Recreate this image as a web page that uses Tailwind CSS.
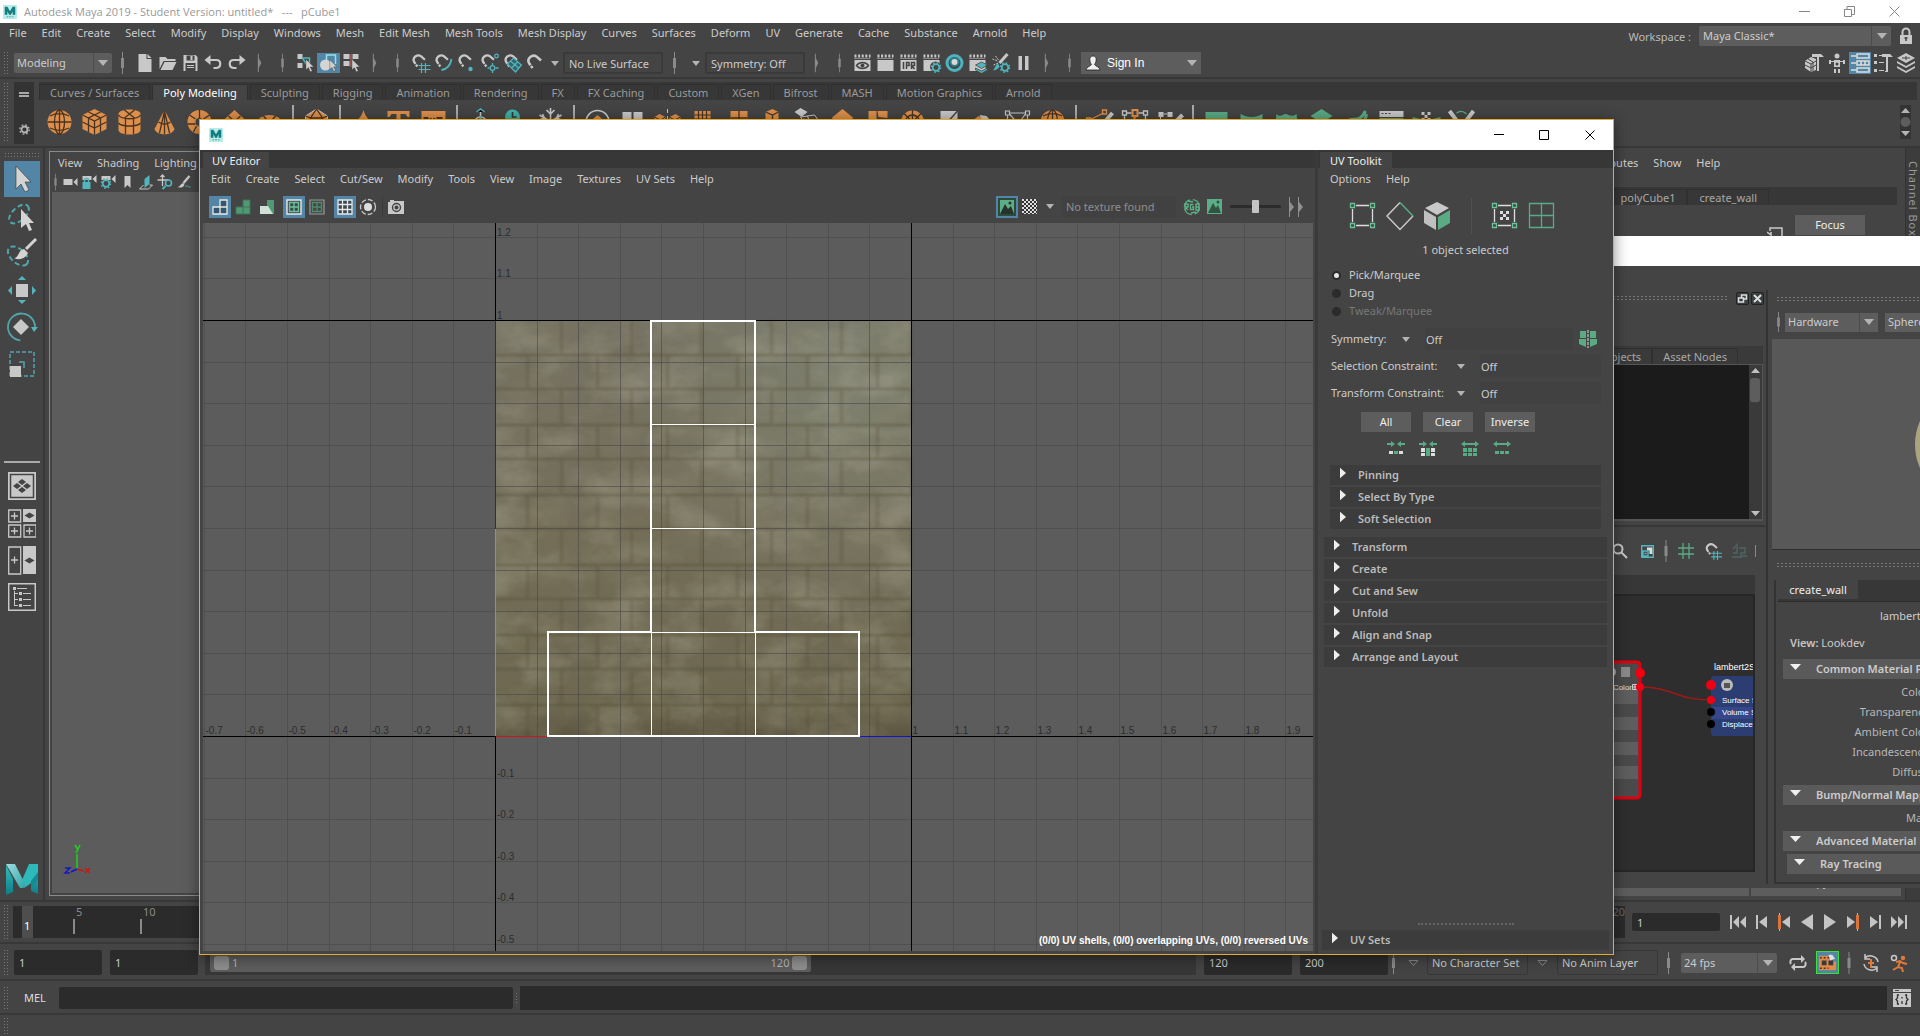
<!DOCTYPE html>
<html lang="en">
<head>
<meta charset="utf-8">
<title>Autodesk Maya 2019</title>
<script src="https://cdn.jsdelivr.net/npm/@tailwindcss/browser@4"></script>
</head>
<body class="relative flex h-screen flex-col overflow-hidden bg-[#444444] font-['Noto_Sans','Open_Sans',sans-serif] text-[11px] leading-4 text-[#cccccc] whitespace-nowrap">

<svg class="absolute size-0" aria-hidden="true">
  <defs>
    <linearGradient id="mA" x1="0" y1="0" x2="1" y2="1"><stop offset="0" stop-color="#9fdde0"/><stop offset="1" stop-color="#2aa4a6"/></linearGradient>
    <linearGradient id="mB" x1="0" y1="0" x2="0" y2="1"><stop offset="0" stop-color="#2fc0c0"/><stop offset="1" stop-color="#0f7d86"/></linearGradient>
  </defs>
  <symbol id="logo" viewBox="0 0 16 16"><path fill="#b8ecea" d="M0 0h16v16H0z"/><path fill="#137d7f" d="M2 2h3l3 5 3-5h3v9h-3V7l-2 4H7L5 7v4H2z"/><path stroke="#4c9b98" d="M4 13.500h8" stroke-dasharray="2 1"/></symbol>
  <symbol id="mayaM" viewBox="0 0 34 32"><path fill="url(#mB)" d="M1 2l7 14v13l-7 3z"/><path fill="url(#mB)" d="M33 1v30l-7-3V14z"/><path fill="#2db9bb" d="M24 1h9v8l-8 12-6 4-2-8z"/><path fill="#128c93" d="M33 9v8l-7 8V18z"/><path fill="url(#mA)" d="M1 1h9l11 22-3 2h-3z"/></symbol>
  <symbol id="sep" viewBox="0 0 8 24"><path fill="#8a8a8a" d="M3.500 1h1v22h-1zM2.500 7h3v10h-3z"/></symbol>
  <symbol id="sepR" viewBox="0 0 8 24"><path fill="#8a8a8a" d="M2 1h1.200v5l3 6-3 6v5H2z"/></symbol>
  <symbol id="tri" viewBox="0 0 10 6"><path fill="#b4b4b4" d="M0 0h10L5 6z"/></symbol>
  <symbol id="tri-w" viewBox="0 0 11 6"><path fill="#f0f0f0" d="M0 0h11L5.500 6z"/></symbol>
  <symbol id="tri-r" viewBox="0 0 7 12"><path fill="#eeeeee" d="M0 0l7 6-7 6z"/></symbol>
  <symbol id="cursor" viewBox="0 0 20 20"><path fill="#cfcfcf" stroke="#444" stroke-width=".6" d="M5 1l11 11h-5l3 6-3 1-2.500-6L5 16z"/></symbol>

  <symbol id="new" viewBox="0 0 20 20"><path fill="#c8c8c8" d="M4 1h8v5h5v13H4z"/><path fill="#c8c8c8" d="M13 1l4 4h-4z"/></symbol>
  <symbol id="open" viewBox="0 0 20 20"><path fill="#c8c8c8" d="M2 4h6l2 2h8v2H6L2 16z"/><path fill="#c8c8c8" d="M7 9h12l-4 8H3z"/></symbol>
  <symbol id="save" viewBox="0 0 20 20"><path fill="#c8c8c8" d="M3 2h12l2 2v14H3z"/><path fill="#444" d="M6 2.500h8v5H6zM5 10h10v8H5z"/><path fill="#c8c8c8" d="M10 3h2v4h-2zM6.500 12h7v1h-7zM6.500 14h7v1h-7z"/></symbol>
  <symbol id="undo" viewBox="0 0 20 20"><path fill="none" stroke="#c8c8c8" stroke-width="2.200" d="M4 7h9c5 0 5 7 0 8h-3"/><path fill="#c8c8c8" d="M7 2v10L1 7z"/></symbol>
  <symbol id="redo" viewBox="0 0 20 20"><path fill="none" stroke="#c8c8c8" stroke-width="2.200" d="M16 7H7c-5 0-5 7 0 8h3"/><path fill="#c8c8c8" d="M13 2v10l6-5z"/></symbol>
  <symbol id="selH" viewBox="0 0 20 20"><path fill="#c8c8c8" d="M2 1h5v5H2zM2 10h5v5H2z"/><path fill="none" stroke="#52b5bd" stroke-width="1.500" d="M7 5h7v5M7 5l5 8"/><use href="#cursor" x="7" y="5" width="14" height="15"/></symbol>
  <symbol id="selO" viewBox="0 0 20 20"><path fill="none" stroke="#9be0e6" stroke-width="1.500" d="M8 8V2h9v9"/><circle cx="7" cy="12" r="5.500" fill="#d4d4d4"/><use href="#cursor" x="8" y="5" width="13" height="15"/></symbol>
  <symbol id="selC" viewBox="0 0 20 20"><path fill="#c8c8c8" d="M2 1h6v5H2zM2 8h6v5H2z"/><path fill="#d46a6a" d="M9 1h1v13H9z"/><path fill="#c8c8c8" d="M11 1h6v5h-6z"/><use href="#cursor" x="7" y="5" width="14" height="15"/></symbol>
  <symbol id="mag" viewBox="0 0 20 20"><path fill="none" stroke="#c8c8c8" stroke-width="2.600" d="M7 15L3.500 10C1 5 7 1 11 3.500l4.500 4" stroke-dasharray="2.500 1 30"/></symbol>
  <symbol id="mGrid" viewBox="0 0 20 20"><use href="#mag" width="19" height="18"/><path stroke="#52b5bd" stroke-width="1.200" d="M11 10v10M15 10v10M8 12.500h12M8 16.500h12"/></symbol>
  <symbol id="mCurve" viewBox="0 0 20 20"><use href="#mag" width="19" height="18"/><path fill="none" stroke="#52b5bd" stroke-width="1.800" d="M8 17c6-1 9-5 10-11"/></symbol>
  <symbol id="mPt" viewBox="0 0 20 20"><use href="#mag" width="19" height="18"/><circle cx="14" cy="16" r="2.200" fill="#52b5bd"/></symbol>
  <symbol id="mProj" viewBox="0 0 20 20"><use href="#mag" width="19" height="18"/><g fill="none" stroke="#52b5bd" stroke-width="1.300"><circle cx="13" cy="15" r="2.300"/><circle cx="17" cy="3" r="1.800"/><path d="M13 10v2M13 18v2M8 15h2M16 15h3"/></g></symbol>
  <symbol id="mView" viewBox="0 0 20 20"><use href="#mag" width="19" height="18"/><path fill="#33666a" stroke="#52b5bd" stroke-width="1.200" d="M5 11l6-6 8 7-6 7zM9 15l6-6M8 8l8 7"/></symbol>

  <symbol id="clap" viewBox="0 0 20 20"><path fill="#c8c8c8" d="M2 7h16v11H2z"/><path stroke="#c8c8c8" stroke-width="3" stroke-dasharray="2 1.600" d="M2 3h16"/><path stroke="#c8c8c8" d="M2 5.500h16" stroke-dasharray="1 1"/></symbol>
  <symbol id="c1" viewBox="0 0 20 20"><use href="#clap" width="20" height="20"/><path fill="none" stroke="#444" stroke-width="1.400" d="M4 12.500c3-4 9-4 12 0-3 4-9 4-12 0z"/><circle cx="10" cy="12.500" r="2" fill="#444"/></symbol>
  <symbol id="c3" viewBox="0 0 20 20"><use href="#clap" width="20" height="20"/><path fill="none" stroke="#444" stroke-width="1.500" d="M5 9v7M8 16V9.500h2.500v3H8M13 16V9.500h3v3h-3l3 3.500"/></symbol>
  <symbol id="gear" viewBox="0 0 10 10"><circle cx="5" cy="5" r="3" fill="none" stroke="#52b5bd" stroke-width="1.600"/><circle cx="5" cy="5" r="4.300" fill="none" stroke="#52b5bd" stroke-width="1.200" stroke-dasharray="1.500 1.900"/></symbol>
  <symbol id="c4" viewBox="0 0 20 20"><use href="#clap" width="20" height="20"/><circle cx="14" cy="14" r="5.500" fill="#444"/><use href="#gear" x="9" y="9" width="11" height="11"/></symbol>
  <symbol id="c5" viewBox="0 0 20 20"><circle cx="10" cy="10" r="7.500" fill="none" stroke="#4fb3bf" stroke-width="3"/><circle cx="10" cy="9" r="4" fill="#d8d8d8" stroke="#2c7f88" stroke-width="2"/></symbol>
  <symbol id="c6" viewBox="0 0 20 20"><use href="#clap" width="20" height="20"/><path fill="#52b5bd" stroke="#444" stroke-width=".8" d="M14 9l6 3-6 3.500L8 12zM8 15l6 3 6-3v2l-6 3.500L8 17z"/></symbol>
  <symbol id="c7" viewBox="0 0 20 20"><path stroke="#c8c8c8" stroke-width="3" d="M9 10l8-9"/><path stroke="#c8c8c8" d="M2 6l5 2M3 12l5-2M5 3l3 4" stroke-dasharray="2 1"/><path fill="#52b5bd" d="M2 17c3 0 2-6 6-6l1 3c-2 2-4 4-7 3z"/><use href="#gear" x="9" y="9" width="11" height="11"/></symbol>
  <symbol id="pause" viewBox="0 0 20 20"><path fill="#c8c8c8" d="M5 3h3.500v14H5zM11.500 3H15v14h-3.500z"/></symbol>

  <symbol id="s-sph" viewBox="0 0 28 28"><circle cx="14" cy="14" r="12" fill="#dd8f4c"/><g fill="none" stroke="#4a3320" stroke-width="1.300"><ellipse cx="14" cy="14" rx="5" ry="12"/><path d="M2 14h24M4.500 8c6-3 13-3 19 0M4.500 20c6 3 13 3 19 0M14 2v24"/></g></symbol>
  <symbol id="s-cube" viewBox="0 0 28 28"><path fill="#dd8f4c" d="M14 1l12 6v14l-12 6-12-6V7z"/><path fill="none" stroke="#4a3320" stroke-width="1.300" d="M2 7l12 6 12-6M14 13v14M2 14l12 6 12-6M8 4l12 6v14M20 4L8 10v14"/></symbol>
  <symbol id="s-cyl" viewBox="0 0 28 28"><path fill="#dd8f4c" d="M3 6c0-6 22-6 22 0v16c0 6-22 6-22 0z"/><path fill="none" stroke="#4a3320" stroke-width="1.300" d="M3 7c3 5 19 5 22 0M3 15c3 4 19 4 22 0M10 11v15M18 11v15M9 2l10 8M19 2L9 10"/></symbol>
  <symbol id="s-cone" viewBox="0 0 28 28"><path fill="#dd8f4c" d="M14 2l10 19c-2 7-18 7-20 0z"/><path fill="none" stroke="#4a3320" stroke-width="1.300" d="M14 2v24M8 14c4 3 8 3 12 0M14 3L9 25M14 3l5 22"/></symbol>
  <symbol id="s-tor" viewBox="0 0 28 28"><circle cx="14" cy="14" r="8" fill="none" stroke="#dd8f4c" stroke-width="8"/><path stroke="#4a3320" stroke-width="1.300" d="M14 2v8M4 7l6 4M24 7l-6 4M2 16h8M18 16h8M8 24l3-6"/></symbol>
  <symbol id="s-pln" viewBox="0 0 28 28"><path fill="#dd8f4c" d="M14 2l12 11-12 11L2 13z"/><path stroke="#4a3320" stroke-width="1.300" d="M8 8l12 11M20 8L8 19"/></symbol>
  <symbol id="s-dsc" viewBox="0 0 28 28"><ellipse cx="14" cy="15" rx="12" ry="8" fill="#dd8f4c"/><path stroke="#4a3320" stroke-width="1.300" d="M2 15h24M8 8l12 14M20 8L8 22"/></symbol>
  <symbol id="s-ico" viewBox="0 0 28 28"><path fill="#dd8f4c" stroke="#c8c8c8" d="M14 1l11 7v13l-11 6-11-6V8z"/><path fill="none" stroke="#4a3320" stroke-width="1.300" d="M14 1l-6 9h12zM3 8l5 2 6 12 6-12 5-2"/></symbol>
  <symbol id="s-star" viewBox="0 0 28 28"><path fill="#dd8f4c" d="M14 2c2 7 5 10 11 12-6 2-9 5-11 12C12 19 9 16 3 14c6-2 9-5 11-12z"/></symbol>
  <symbol id="s-T" viewBox="0 0 28 28"><path fill="#dd8f4c" d="M3 3h22v6h-2l-2-3h-5v19h3v2h-10v-2h3V6H7L5 9H3z"/></symbol>
  <symbol id="s-svg" viewBox="0 0 28 28"><path fill="#dd8f4c" d="M2 3h24v22H2z"/><path fill="none" stroke="#4a3320" stroke-width="2" d="M9 10H5v3h4v4H5M11 10l2 7 2-7M23 10h-5v7h5v-3h-2"/></symbol>
  <symbol id="s-piv" viewBox="0 0 28 28"><path fill="none" stroke="#c8c8c8" stroke-width="1.500" d="M14 1v12M8 18c-2-5 2-9 6-9s8 4 6 9"/><path stroke="#52b5bd" stroke-width="1.500" d="M14 8v10M10 4l4-3 4 3"/></symbol>
  <symbol id="s-clk" viewBox="0 0 28 28"><circle cx="11" cy="9" r="7.500" fill="#3fb2a8"/><path fill="none" stroke="#333" stroke-width="1.600" d="M11 4v5h4"/><path fill="#4fae86" d="M15 15l8-3 4 4-4 10H13z"/></symbol>
  <symbol id="s-snow" viewBox="0 0 28 28"><path fill="none" stroke="#c8c8c8" stroke-width="1.600" d="M14 0v26M3 7l22 13M25 7L3 20M10 2l4 4 4-4M3 12l5-2-2-4M25 12l-5-2 2-4"/></symbol>
  <symbol id="s-comb" viewBox="0 0 28 28"><circle cx="14" cy="14" r="11.500" fill="none" stroke="#c8c8c8" stroke-width="1.600"/><path fill="#dd8f4c" d="M14 7l8 7-8 5-8-5z"/></symbol>
  <symbol id="s-sep" viewBox="0 0 28 28"><path fill="#c8c8c8" d="M4 4h9v20H4zM15 4h9v20h-9z"/></symbol>
  <symbol id="s-mir" viewBox="0 0 28 28"><path fill="#dd8f4c" d="M1 9l5-3 6 3v10l-6 3-5-3zM27 9l-5-3-6 3v10l6 3 5-3z"/><path stroke="#c8c8c8" stroke-dasharray="4 3" d="M14 1v26"/><path fill="none" stroke="#4a3320" d="M1 9l6 3 5-3M27 9l-6 3-5-3"/></symbol>
  <symbol id="s-grid" viewBox="0 0 28 28"><path fill="#dd8f4c" d="M6 3h16v18H6z"/><path stroke="#4a3320" stroke-width="1.200" d="M10 3v18M14 3v18M18 3v18M6 7h16M6 11h16M6 15h16"/><path fill="#c8c8c8" d="M0 12h4v8H0z"/></symbol>
  <symbol id="s-red" viewBox="0 0 28 28"><path fill="#dd8f4c" d="M7 3h17v20H7z"/><path stroke="#4a3320" stroke-width="1.300" d="M15.500 3v20M7 10h17"/><path fill="#c8c8c8" d="M0 12h5v7H0z"/></symbol>
  <symbol id="s-rem" viewBox="0 0 28 28"><path fill="#dd8f4c" d="M7 4l7-3 6 3v20l-6 3-7-3z"/><path fill="none" stroke="#4a3320" stroke-width="1.300" d="M7 4l7 3 6-3M14 7v20"/></symbol>
  <symbol id="s-ext" viewBox="0 0 28 28"><path fill="#c8c8c8" d="M7 0l7 4-6 5-7-5z"/><path fill="none" stroke="#c8c8c8" d="M7 9l14-2 6 8-12 6zM10 11l12 4M14 8l4 12"/><path fill="#dd8f4c" d="M15 12l8 3-6 4z"/></symbol>
  <symbol id="s-bev" viewBox="0 0 28 28"><path fill="#dd8f4c" d="M14 1l11 9-11 7L3 10z"/><path fill="none" stroke="#c8c8c8" stroke-width="2.500" d="M2 12l12 8 12-8M2 18l12 8 12-8"/></symbol>
  <symbol id="s-bri" viewBox="0 0 28 28"><path fill="#dd8f4c" d="M5 3h8v8h11v14H5z"/><path fill="#dd8f4c" d="M14 3h10v7l-9-1z"/><path fill="#c8c8c8" d="M0 12h4v7H0z"/></symbol>
  <symbol id="s-whl" viewBox="0 0 28 28"><circle cx="14" cy="14" r="11.500" fill="#dd8f4c"/><circle cx="14" cy="14" r="7" fill="none" stroke="#4a3320" stroke-width="1.300"/><path stroke="#4a3320" stroke-width="1.300" d="M14 2v24M2 14h24M5.500 5.500l17 17M22.500 5.500l-17 17"/></symbol>
  <symbol id="s-tri" viewBox="0 0 28 28"><path fill="#c8c8c8" d="M7 3h17v20H7z"/><path stroke="#444" stroke-width="1.500" d="M24 3L7 22"/></symbol>
  <symbol id="s-smo" viewBox="0 0 28 28"><path fill="#dd8f4c" d="M2 14l8-6 8 4v8H4z"/><path fill="#c8c8c8" d="M11 7l7 1 8 9-8 3z"/></symbol>
  <symbol id="s-cage" viewBox="0 0 28 28"><g fill="none" stroke="#c8c8c8" stroke-width="1.200"><path d="M2 3h4v4H2zM22 3h4v4h-4zM6 5h16M4 7v16M24 7v16M4 23h20M6 6l7 8-7 8M22 6l-6 8 6 8"/></g></symbol>
  <symbol id="s-pen" viewBox="0 0 28 28"><path fill="none" stroke="#dd8f4c" stroke-width="1.300" d="M4 12L18 5M1 10h4v4H1zM17 2h4v4h-4z"/><path stroke="#c8c8c8" stroke-width="4" d="M27 5L12 22"/></symbol>
  <symbol id="s-box" viewBox="0 0 28 28"><g fill="none" stroke-width="1.300"><path stroke="#c8c8c8" d="M2 3h4v4H2zM23 3h4v4h-4zM6 5h5M18 5h5M4 7v16M25 7v16"/><path stroke="#dd8f4c" stroke-width="2" d="M12 2h5v6h-5zM14 8v12"/></g></symbol>
  <symbol id="s-q" viewBox="0 0 28 28"><path fill="#c8c8c8" d="M3 4h5v5H3zM12 4h5v5h-5z"/><path stroke="#c8c8c8" d="M8 6h4M5 9v12"/><path stroke="#c8c8c8" stroke-width="4" d="M27 7L14 20"/></symbol>
  <symbol id="s-g1" viewBox="0 0 28 28"><path fill="#5aab84" d="M3 4h22v20H3z"/></symbol>
  <symbol id="s-g2" viewBox="0 0 28 28"><path fill="#5aab84" d="M3 6c7 4 15 4 22 0v18H3z"/></symbol>
  <symbol id="s-g3" viewBox="0 0 28 28"><path fill="#5aab84" d="M4 6c4 4 6 0 9 0s6 4 11 0l2 18H2z"/></symbol>
  <symbol id="s-g4" viewBox="0 0 28 28"><path fill="#5aab84" d="M14 1l11 7-11 7L3 8z"/><path fill="#c8c8c8" d="M3 12l11 7 11-7v4l-11 7-11-7z"/></symbol>
  <symbol id="s-g5" viewBox="0 0 28 28"><path fill="none" stroke="#5aab84" stroke-width="3" d="M3 14c7-6 14 2 20-11M10 20c8 0 13-6 14-14"/></symbol>
  <symbol id="s-g6" viewBox="0 0 28 28"><path fill="#c8c8c8" d="M2 3h24v6H2z"/><path stroke="#444" stroke-dasharray="2 1.500" d="M4 5.500h10"/><path fill="#5aab84" d="M2 10h24v15H2z"/><path fill="#ccc" d="M7 12h5v4H7zM16 12h5v4h-5z"/></symbol>
  <symbol id="s-g7" viewBox="0 0 28 28"><path fill="#5aab84" d="M0 9l8 2-2 9-6-4zM28 9l-8 2 2 9 6-4z"/><path fill="#c8c8c8" d="M9 4h3v3H9zM15 4h3v3h-3zM12 7h3v3h-3zM9 10h3v3H9zM15 10h3v3h-3z"/></symbol>
  <symbol id="s-g8" viewBox="0 0 28 28"><path fill="none" stroke="#c8c8c8" stroke-width="4" d="M2 3l12 16L26 3"/><path fill="none" stroke="#5aab84" stroke-width="1.500" d="M9 5c4-3 8-1 10 1"/></symbol>

  <symbol id="rew" viewBox="0 0 18 18"><path fill="#c4c4c4" d="M1 2h2v14H1zM10 3v12L4 9zM17 3v12l-6-6z"/></symbol>
  <symbol id="prev" viewBox="0 0 18 18"><path fill="#c4c4c4" d="M4 2h2v14H4zM15 3v12L7 9z"/></symbol>
  <symbol id="pkey" viewBox="0 0 18 18"><path fill="#d9743a" d="M3 2h3v14H3z"/><path stroke="#bbb" d="M4.500 0v2M4.500 16v2"/><path fill="#c4c4c4" d="M15 3v12L7 9z"/></symbol>
  <symbol id="back" viewBox="0 0 18 18"><path fill="#c4c4c4" d="M15 1v16L3 9z"/></symbol>
</svg>

<!-- Title bar -->
<header class="flex h-[23px] shrink-0 items-center bg-white pl-[3px] text-[#999999]">
  <svg class="size-[14px]"><use href="#logo"/></svg>
  <h1 class="ml-[7px] whitespace-pre font-['Open_Sans','Noto_Sans',sans-serif]">Autodesk Maya 2019 - Student Version: untitled*   ---   pCube1</h1>
  <div class="ml-auto flex gap-[34px] pr-5">
    <button aria-label="Minimize"><svg class="h-3 w-[11px]" fill="none" stroke="#888"><path d="M0 5.500h11"/></svg></button>
    <button aria-label="Restore"><svg class="h-3 w-[11px]" fill="none" stroke="#888"><path d="M.5 3.500h7v7h-7zM3 3V.5h7.500v8H8"/></svg></button>
    <button aria-label="Close"><svg class="h-3 w-[11px]" fill="none" stroke="#888"><path d="M.5.5l10 10M10.500.5l-10 10"/></svg></button>
  </div>
</header>

<!-- Menu bar -->
<div class="flex h-6 shrink-0 items-start">
  <nav class="flex gap-[15px] pt-[2px] pl-[9px]">
    <a href="#">File</a><a href="#">Edit</a><a href="#">Create</a><a href="#">Select</a><a href="#">Modify</a><a href="#">Display</a><a href="#">Windows</a><a href="#">Mesh</a><a href="#">Edit Mesh</a><a href="#">Mesh Tools</a><a href="#">Mesh Display</a><a href="#">Curves</a><a href="#">Surfaces</a><a href="#">Deform</a><a href="#">UV</a><a href="#">Generate</a><a href="#">Cache</a><a href="#">Substance</a><a href="#">Arnold</a><a href="#">Help</a>
  </nav>
  <label for="ws" class="mt-[6px] mr-2 ml-auto text-[#bbbbbb]">Workspace :</label>
  <div class="relative mt-[3px] h-5 w-[192px]">
    <select id="ws" class="h-full w-full appearance-none rounded-[2px] bg-[#5d5d5d] pl-1"><option>Maya Classic*</option></select>
    <span class="pointer-events-none absolute inset-y-0 right-0 flex w-5 items-center justify-center border-l border-[#4c4c4c]"><svg class="h-[6px] w-[10px]"><use href="#tri"/></svg></span>
  </div>
  <svg class="mt-1 mr-[7px] ml-2 h-[18px] w-[14px]" viewBox="0 0 14 18"><path fill="none" stroke="#c8c8c8" stroke-width="2" d="M3.500 8V5a3.500 3.500 0 017 0v3"/><path fill="#c8c8c8" d="M1 8h12v9H1z"/><path stroke="#444" stroke-width="1.500" d="M7 10v4M5.500 11h3"/></svg>
</div>

<!-- Status line -->
<div class="flex h-8 shrink-0 items-center border-b-2 border-[#383838] pt-[2px]">
  <span class="ml-[3px] h-6 w-[5px] bg-[radial-gradient(circle,#777777_1px,transparent_1px)] bg-[length:3px_3px]"></span>
  <div class="relative ml-[6px] h-5 w-[98px]">
    <select aria-label="Menu set" class="h-full w-full appearance-none rounded-[2px] bg-[#5d5d5d] pl-[3px]"><option>Modeling</option></select>
    <span class="pointer-events-none absolute inset-y-0 right-0 flex w-[19px] items-center justify-center border-l border-[#4c4c4c]"><svg class="h-[6px] w-[10px]"><use href="#tri"/></svg></span>
  </div>
  <svg class="h-6 w-[21px]"><use href="#sep"/></svg>
  <div class="flex *:h-5 *:w-[23px]">
    <svg><use href="#new"/></svg><svg><use href="#open"/></svg><svg><use href="#save"/></svg><svg><use href="#undo"/></svg><svg><use href="#redo"/></svg>
    <svg><use href="#sepR"/></svg><svg><use href="#sep"/></svg>
    <svg><use href="#selH"/></svg><svg class="bg-[#5285a6]"><use href="#selO"/></svg><svg><use href="#selC"/></svg>
    <svg><use href="#sepR"/></svg><svg><use href="#sep"/></svg>
    <svg><use href="#mGrid"/></svg><svg><use href="#mCurve"/></svg><svg><use href="#mPt"/></svg><svg><use href="#mProj"/></svg><svg><use href="#mView"/></svg><svg><use href="#mag"/></svg>
  </div>
  <span class="flex w-4 justify-center"><svg class="h-[5px] w-2"><use href="#tri"/></svg></span>
  <input aria-label="Live surface" value="No Live Surface" readonly class="h-[22px] w-[100px] rounded-[2px] border-2 border-[#3a3a3a] bg-transparent pl-1">
  <svg class="h-6 w-[23px]"><use href="#sep"/></svg>
  <span class="flex w-[19px] justify-center"><svg class="h-[5px] w-2"><use href="#tri"/></svg></span>
  <input aria-label="Symmetry" value="Symmetry: Off" readonly class="h-[22px] w-[100px] rounded-[2px] border-2 border-[#3a3a3a] bg-transparent pl-1">
  <div class="flex *:h-5 *:w-[23px]">
    <svg><use href="#sepR"/></svg><svg><use href="#sep"/></svg>
    <svg><use href="#c1"/></svg><svg><use href="#clap"/></svg><svg><use href="#c3"/></svg><svg><use href="#c4"/></svg><svg><use href="#c5"/></svg><svg><use href="#c6"/></svg><svg><use href="#c7"/></svg><svg><use href="#pause"/></svg>
    <svg><use href="#sepR"/></svg><svg><use href="#sep"/></svg>
  </div>
  <button class="flex h-[22px] w-[120px] items-center bg-[#5d5d5d] px-1 font-['Liberation_Sans',sans-serif] text-[12px] text-white">
    <svg class="mr-[6px] size-4" viewBox="0 0 16 16"><path fill="#f0f0f0" stroke="#222" stroke-width=".8" d="M8 1c5 0 3 7 1.500 8.500C10 11 15 12 15 15H1c0-3 5-4 5.500-5.500C5 8 3 1 8 1z"/></svg>
    Sign In<svg class="ml-auto h-[6px] w-[10px]"><use href="#tri"/></svg>
  </button>
  <div class="ml-auto flex gap-[1px] pr-[3px] *:h-[22px] *:w-[22px]">
    <svg viewBox="0 0 22 22"><path fill="#c8c8c8" d="M2 9l6-4 5 2v11l-5 2-6-4zM9 2h9l3 3h-5v14h-2V5H9z"/><path stroke="#444" fill="none" d="M2 9l6 3 5-3M8 12v8M2 13l6 3 5-3M5 7l5 3v9"/></svg>
    <svg viewBox="0 0 22 22" fill="#c8c8c8"><circle cx="11" cy="4" r="2.500"/><path d="M8 8h6v7H8zM8 17h2v4H8zM12 17h2v4h-2zM3 8h2v4H3zM17 8h2v4h-2zM5 9h12v1H5z"/><circle cx="11" cy="12" r="1.500" fill="#444"/></svg>
    <svg class="bg-[#5285a6]" viewBox="0 0 22 22" fill="none" stroke="#ddd" stroke-width="1.600"><path d="M2 4h5M8 2h12v4H8zM2 11h5M8 9h12v4H8zM2 18h5M8 16h12v4H8zM12 9v4M16 9v4"/></svg>
    <svg viewBox="0 0 22 22"><path fill="#c8c8c8" d="M2 2h3v3H2zM2 9h3v3H2zM2 17h3v3H2zM7 3h3v1H7zM7 10h5v1H7zM7 18h5v1H7zM10 2h8l3 3h-5v15h-3v-1h1V5h-4z"/></svg>
    <svg viewBox="0 0 22 22"><path fill="#c8c8c8" d="M11 1l9 5-9 5-9-5zM2 9l9 5 9-5v2l-9 5-9-5zM2 14l9 5 9-5v2l-9 5-9-5z"/><path stroke="#444" d="M7 6h8M11 4v4"/></svg>
  </div>
</div>

<!-- Shelf -->
<div class="flex h-[69px] shrink-0 border-b-2 border-[#383838] pt-[3px]">
  <span class="ml-[3px] h-[60px] w-[5px] bg-[radial-gradient(circle,#777777_1px,transparent_1px)] bg-[length:3px_3px]"></span>
  <div class="ml-[6px] flex h-[62px] w-5 flex-col items-center justify-between bg-[#333333] pt-[10px] pb-[9px]">
    <svg class="h-[6px] w-[10px]" fill="#aaa"><path d="M0 0h10v2H0zM0 3h10v2H0z"/></svg>
    <svg class="size-[11px]" viewBox="0 0 11 11" fill="none" stroke="#b4b4b4"><circle cx="5.500" cy="5.500" r="3" stroke-width="1.800"/><circle cx="5.500" cy="5.500" r="4.700" stroke-width="1.300" stroke-dasharray="1.800 1.900"/></svg>
  </div>
  <div class="ml-[5px] flex-1">
    <div class="mr-[3px] flex h-[18px] items-end gap-[2px] bg-[#373737] text-[#9a9a9a] *:h-4 *:border-x *:border-t *:border-[#303030] *:px-[10px]">
      <button>Curves / Surfaces</button><button class="bg-[#444444] text-white">Poly Modeling</button><button>Sculpting</button><button>Rigging</button><button>Animation</button><button>Rendering</button><button>FX</button><button>FX Caching</button><button>Custom</button><button>XGen</button><button>Bifrost</button><button>MASH</button><button>Motion Graphics</button><button>Arnold</button>
    </div>
    <div class="mt-[7px] flex h-[30px] items-center">
      <div class="ml-[3px] flex *:h-[28px] *:w-[35px]">
        <svg><use href="#s-sph"/></svg><svg><use href="#s-cube"/></svg><svg><use href="#s-cyl"/></svg><svg><use href="#s-cone"/></svg><svg><use href="#s-tor"/></svg><svg><use href="#s-pln"/></svg><svg><use href="#s-dsc"/></svg>
      </div>
      <span class="mx-[5px] h-[34px] w-[2px] bg-[#aaaaaa]"></span>
      <svg class="h-7 w-[35px]"><use href="#s-ico"/></svg>
      <span class="mx-[5px] h-[34px] w-[2px] bg-[#aaaaaa]"></span>
      <div class="flex *:h-[28px] *:w-[35px]"><svg><use href="#s-star"/></svg><svg><use href="#s-T"/></svg><svg><use href="#s-svg"/></svg></div>
      <span class="mx-[5px] h-[34px] w-[2px] bg-[#aaaaaa]"></span>
      <div class="flex *:h-[28px] *:w-[35px]"><svg><use href="#s-piv"/></svg><svg><use href="#s-clk"/></svg><svg><use href="#s-snow"/></svg></div>
      <span class="mx-[5px] h-[34px] w-[2px] bg-[#aaaaaa]"></span>
      <div class="flex *:h-[28px] *:w-[35px]">
        <svg><use href="#s-comb"/></svg><svg><use href="#s-sep"/></svg><svg><use href="#s-mir"/></svg><svg><use href="#s-grid"/></svg><svg><use href="#s-red"/></svg><svg><use href="#s-rem"/></svg><svg><use href="#s-ext"/></svg><svg><use href="#s-bev"/></svg><svg><use href="#s-bri"/></svg><svg><use href="#s-whl"/></svg><svg><use href="#s-tri"/></svg><svg><use href="#s-smo"/></svg><svg><use href="#s-cage"/></svg><svg><use href="#s-sph"/></svg>
      </div>
      <span class="mx-[5px] h-[34px] w-[2px] bg-[#aaaaaa]"></span>
      <div class="flex *:h-[28px] *:w-[35px]"><svg><use href="#s-pen"/></svg><svg><use href="#s-box"/></svg><svg><use href="#s-q"/></svg></div>
      <span class="mx-[5px] h-[34px] w-[2px] bg-[#aaaaaa]"></span>
      <div class="flex *:h-[28px] *:w-[35px]">
        <svg><use href="#s-g1"/></svg><svg><use href="#s-g2"/></svg><svg><use href="#s-g3"/></svg><svg><use href="#s-g4"/></svg><svg><use href="#s-g5"/></svg><svg><use href="#s-g6"/></svg><svg><use href="#s-g7"/></svg><svg><use href="#s-g8"/></svg>
      </div>
      <svg class="mr-[9px] ml-auto h-[34px] w-[11px] bg-[#333333]" viewBox="0 0 11 34"><path fill="#b4b4b4" d="M1 8h9L5.500 3zM1 26h9l-4.500 5z"/><circle cx="5.500" cy="17" r="5" fill="#5d5d5d"/></svg>
    </div>
  </div>
</div>

<!-- Work area -->
<main class="flex min-h-0 flex-1 border-b-2 border-[#383838]">
  <div class="flex w-[45px] flex-col items-center border-r-2 border-[#383838] pt-1 pb-[5px]">
    <span class="mb-[4px] h-[5px] w-9 shrink-0 bg-[radial-gradient(circle,#777777_1px,transparent_1px)] bg-[length:3px_3px]"></span>
    <button aria-label="Select" class="flex size-9 items-center justify-center bg-[#5285a6]"><svg class="size-8" viewBox="0 0 32 32"><path fill="#d4d4d4" stroke="#333" stroke-width=".6" d="M10 3l15 16h-6l4 8-4 2-4-8-5 5z"/></svg></button>
    <svg class="mt-px h-[37px] w-8" viewBox="0 0 32 37"><ellipse cx="13" cy="16" rx="12" ry="6.500" transform="rotate(-42 13 16)" fill="none" stroke="#52a5ad" stroke-width="2" stroke-dasharray="5 3"/><path fill="#d4d4d4" d="M15 11l13 14h-5l3 7-3 1-3-7-5 4z"/></svg>
    <svg class="h-[37px] w-8" viewBox="0 0 32 37"><ellipse cx="12" cy="21" rx="12" ry="7" transform="rotate(42 12 21)" fill="none" stroke="#52a5ad" stroke-width="2" stroke-dasharray="5 3"/><path stroke="#d4d4d4" stroke-width="3" d="M30 4L20 14"/><path fill="#d4d4d4" d="M8 23c5 0 4-8 10-9l4 4c-2 5-8 8-14 5z"/></svg>
    <svg class="h-[37px] w-8" viewBox="0 0 32 37"><path fill="#c8c8c8" d="M10 12h12v13H10z"/><path fill="#52b5bd" d="M12 8l4-4 4 4zM12 28l4 4 4-4zM6 14l-4 4.500L6 23zM26 14l4 4.500-4 4.500z"/></svg>
    <svg class="h-[37px] w-8" viewBox="0 0 32 37"><circle cx="15.500" cy="18" r="13.500" fill="none" stroke="#52a5ad" stroke-width="1.800" stroke-dasharray="65 20" transform="rotate(95 15.500 18)"/><path fill="#52b5bd" d="M25 18h7l-4 5z"/><path fill="#c8c8c8" d="M15 10l8 8-8 8-8-8z"/></svg>
    <svg class="h-[37px] w-8" viewBox="0 0 32 37"><path fill="none" stroke="#52a5ad" stroke-width="1.500" stroke-dasharray="4 2" d="M4 6h24v24H4z"/><path fill="none" stroke="#52a5ad" stroke-width="1.500" d="M13 16h5v6"/><path fill="#c8c8c8" d="M4 20h11v11H4z"/></svg>
    <span class="mt-[78px] mb-[5px] h-[2px] w-9 shrink-0 bg-[#aaaaaa]"></span>
    <svg class="h-[37px] w-7" viewBox="0 0 28 37"><path fill="#c8c8c8" d="M0 4h28v28H0z"/><path fill="none" stroke="#444" stroke-width="1.500" d="M2.500 6.500h23v23h-23z"/><path fill="#444" d="M14 11l4 3-4 3-4-3zM14 19l4 3-4 3-4-3zM9 15l4 3-4 3-4-3zM19 15l4 3-4 3-4-3z"/></svg>
    <svg class="h-[37px] w-7" viewBox="0 0 28 37"><g fill="none" stroke="#c8c8c8" stroke-width="1.300"><path d="M.7 5h12v12H.7zM.7 20h12v12H.7zM16 20h12v12H16zM3 11h7M6.500 7.500v7M3 26h7M6.500 22.500v7M18 26h7M21.500 22.500v7"/></g><path fill="#c8c8c8" d="M15 4h13v13H15z"/><path fill="#444" d="M21.500 7.500l5 3-5 3-5-3z"/></svg>
    <svg class="h-[37px] w-7" viewBox="0 0 28 37"><path fill="none" stroke="#c8c8c8" stroke-width="1.300" d="M.7 5h12v27H.7zM3 18h7M6.500 14.500v7"/><path fill="#c8c8c8" d="M15 4h13v28H15z"/><path fill="#444" d="M21.500 15.500l5 3-5 3-5-3z"/></svg>
    <svg class="h-[37px] w-7" viewBox="0 0 28 37"><path fill="none" stroke="#c8c8c8" stroke-width="1.500" d="M.7 4.700h26.600v26.600H.7z"/><path fill="#c8c8c8" d="M5 8h3v3H5zM11 13h3v3h-3zM11 19h3v3h-3zM11 25h3v3h-3z"/><path stroke="#c8c8c8" d="M9 9.500h10M15 14.500h8M15 20.500h8M15 26.500h8M6.500 12v15M7 14.500h3M7 20.500h3M7 26.500h3"/></svg>
    <svg class="mt-auto h-8 w-[34px] shrink-0"><use href="#mayaM"/></svg>
  </div>

  <section class="mt-[3px] mb-[4px] ml-[4px] flex min-w-0 flex-1 flex-col overflow-hidden border border-[#8a8a8a] p-[2px]">
    <nav class="flex h-[18px] items-center gap-[15px] pl-[6px]"><a href="#">View</a><a href="#">Shading</a><a href="#">Lighting</a></nav>
    <div class="flex h-[20px] items-center">
      <svg class="h-[18px] w-[7px]"><use href="#sep"/></svg>
      <div class="ml-[2px] flex *:h-4 *:w-[19px]">
        <svg viewBox="0 0 16 16"><path fill="#c8c8c8" d="M1 5h9v6H1zM11 8l4-4v8z"/></svg>
        <svg viewBox="0 0 16 16"><path fill="#c8c8c8" d="M1 2h9v4H1zM11 5l4-4v8z"/><path fill="#52b5bd" d="M1 8h8v7H1z"/><path fill="none" stroke="#52b5bd" stroke-width="1.500" d="M3 8V6c0-2 4-2 4 0v2"/></svg>
        <svg viewBox="0 0 16 16"><path fill="#c8c8c8" d="M1 2h9v4H1zM11 5l4-4v8z"/><use href="#gear" x="0" y="4" width="11" height="11"/></svg>
        <svg viewBox="0 0 16 16"><path fill="#c8c8c8" d="M5 2h6v12l-3-3-3 3z"/></svg>
        <svg viewBox="0 0 16 16"><path fill="#52b5bd" d="M6 5l5-4v9l-5 4z"/><path fill="none" stroke="#c8c8c8" d="M5 11l-4 4h9l4-4h-3"/></svg>
        <svg viewBox="0 0 16 16"><path fill="none" stroke="#c8c8c8" stroke-width="1.300" d="M5 1v11M0 6h11M3 3l2-2 2 2"/><circle cx="11" cy="9" r="3" fill="none" stroke="#52b5bd" stroke-width="1.600"/><path stroke="#52b5bd" stroke-width="2" d="M8 12l-3 3"/></svg>
        <svg viewBox="0 0 16 16"><path stroke="#c8c8c8" stroke-width="2.400" d="M13 2L7 9"/><path fill="#c8c8c8" d="M1 13c3 0 3-4 6-4l1 2c-2 3-4 3-7 2z"/><path stroke="#52b5bd" fill="none" d="M9 13c2-3 3 1 5 0"/></svg>
      </div>
    </div>
    <div class="relative flex-1 bg-[#5c5c5c]">
      <svg class="absolute bottom-4 left-[10px] h-10 w-8" viewBox="0 0 32 40" fill="none" stroke-width="1.500"><path stroke="#1fd21f" d="M15 32V17M13 8l2.500 4M18 8l-4 8"/><path stroke="#d01414" d="M15 32l7 2M23 31l5 5M28 31l-5 5"/><path stroke="#1414d0" d="M15 32l-6 3M3 31h5l-5 5h5"/></svg>
    </div>
  </section>

  <section class="flex w-[360px] shrink-0">
    <div class="flex flex-1 flex-col">
      <nav class="flex h-[39px] items-center gap-[15px] pb-[10px] pl-[27px]"><a href="#">Attributes</a><a href="#">Show</a><a href="#">Help</a></nav>
      <div class="mr-2 flex h-[18px] items-end justify-end bg-[#373737] pr-[128px] text-[#a8a8a8] *:h-4 *:border-x *:border-t *:border-[#303030] *:px-[11px]">
        <button>polyCube1</button><button>create_wall</button>
      </div>
      <div class="mt-[10px] flex justify-end pr-10">
        <svg class="mt-3 mr-3 h-[10px] w-4" fill="none" stroke="#c8c8c8" stroke-width="1.500"><path d="M3 4V1h12v9M0 5l4 3v-3"/></svg>
        <button class="h-5 w-[70px] bg-[#5d5d5d] text-[#eeeeee]">Focus</button>
      </div>
      <div class="mt-auto mr-1 mb-1 flex gap-[2px] *:h-6 *:bg-[#5d5d5d] *:pb-1"><button class="flex-1">Load Attributes</button><button class="w-[150px]">Copy Tab</button></div>
    </div>
    <div class="w-[15px] border-l border-[#333333] bg-[#3c3c3c] pt-[13px] leading-[14px] tracking-[1px] text-[#9a9a9a] [writing-mode:vertical-rl]">Channel Box / Layer Editor</div>
  </section>
</main>

<!-- Time slider -->
<div class="flex h-[42px] shrink-0 items-center border-b-2 border-[#383838]">
  <span class="ml-[3px] h-9 w-[5px] bg-[radial-gradient(circle,#777777_1px,transparent_1px)] bg-[length:3px_3px]"></span>
  <div class="ml-[5px] h-8 min-w-0 flex-1 bg-[#2b2b2b] text-[#8a8a8a]">
    <svg class="h-full w-full" font-size="11"><path fill="#4e4e4e" d="M9 0h11v32H9z"/><path stroke="#8a8a8a" stroke-width="2" d="M61 13v15M128 13v15"/><text x="11" y="24" fill="#fff">1</text><g fill="#8a8a8a"><text x="63" y="10">5</text><text x="130" y="10">10</text></g><text x="100%" y="10" text-anchor="end" fill="#666">120</text></svg>
  </div>
  <input aria-label="Current time" value="1" class="ml-[7px] h-[18px] w-[88px] rounded-[2px] bg-[#2b2b2b] pl-[5px] text-[#cccccc]">
  <div class="mr-3 ml-[9px] flex gap-[5px] *:size-[18px]">
    <button aria-label="Go to start"><svg class="size-full"><use href="#rew"/></svg></button>
    <button aria-label="Step back"><svg class="size-full"><use href="#prev"/></svg></button>
    <button aria-label="Previous key"><svg class="size-full"><use href="#pkey"/></svg></button>
    <button aria-label="Play backwards"><svg class="size-full"><use href="#back"/></svg></button>
    <button aria-label="Play" class="-scale-x-100"><svg class="size-full"><use href="#back"/></svg></button>
    <button aria-label="Next key" class="-scale-x-100"><svg class="size-full"><use href="#pkey"/></svg></button>
    <button aria-label="Step forward" class="-scale-x-100"><svg class="size-full"><use href="#prev"/></svg></button>
    <button aria-label="Go to end" class="-scale-x-100"><svg class="size-full"><use href="#rew"/></svg></button>
  </div>
</div>

<!-- Range slider -->
<div class="flex h-[37px] shrink-0 items-center border-b-2 border-[#383838] pt-[2px]">
  <span class="ml-[3px] h-7 w-[5px] bg-[radial-gradient(circle,#777777_1px,transparent_1px)] bg-[length:3px_3px]"></span>
  <input aria-label="Animation start" value="1" class="ml-[6px] h-[25px] w-[88px] rounded-[2px] bg-[#2b2b2b] pl-[5px]">
  <input aria-label="Playback start" value="1" class="ml-2 h-[25px] w-[88px] rounded-[2px] bg-[#2b2b2b] pl-[5px]">
  <div class="ml-[7px] h-[25px] flex-1 bg-[#373737] pl-[5px]">
    <div class="flex h-[22px] w-[61%] items-center gap-[3px] rounded-[2px] bg-[#5d5d5d] px-1 pt-[3px] text-[#b8b8b8]"><span class="h-[14px] w-[15px] rounded-[3px] bg-[#8e8e8e]"></span>1<span class="ml-auto">120</span><span class="h-[14px] w-[15px] rounded-[3px] bg-[#8e8e8e]"></span></div>
  </div>
  <input aria-label="Playback end" value="120" class="ml-2 h-[25px] w-[88px] rounded-[2px] bg-[#2b2b2b] pl-[5px]">
  <input aria-label="Animation end" value="200" class="ml-2 h-[25px] w-[88px] rounded-[2px] bg-[#2b2b2b] pl-[5px]">
  <svg class="h-6 w-[11px]"><use href="#sep"/></svg>
  <svg class="mr-2 ml-[9px] h-2 w-[11px]" fill="none" stroke="#888"><path d="M1 1.500h9L5.500 6.500z"/></svg>
  <input aria-label="Character set" value="No Character Set" readonly class="h-[25px] w-[101px] rounded-[2px] border border-[#383838] bg-transparent pl-1">
  <svg class="mx-[9px] h-2 w-[11px]" fill="none" stroke="#888"><path d="M1 1.500h9L5.500 6.500z"/></svg>
  <input aria-label="Anim layer" value="No Anim Layer" readonly class="h-[25px] w-[101px] rounded-[2px] border border-[#383838] bg-transparent pl-1">
  <svg class="h-6 w-[21px]"><use href="#sep"/></svg>
  <div class="relative ml-[2px] h-5 w-[96px]">
    <select aria-label="Frame rate" class="h-full w-full appearance-none rounded-[2px] bg-[#5d5d5d] pl-[3px]"><option>24 fps</option></select>
    <span class="pointer-events-none absolute inset-y-0 right-0 flex w-5 items-center justify-center border-l border-[#4c4c4c]"><svg class="h-[6px] w-[10px]"><use href="#tri"/></svg></span>
  </div>
  <svg class="ml-[12px] h-4 w-[18px]" viewBox="0 0 18 16"><path fill="none" stroke="#c8c8c8" stroke-width="2" d="M13 4H4C1 4 1 8 2 9M5 12h9c3 0 3-4 2-5"/><path fill="#c8c8c8" d="M12 0v8l4-4zM6 8v8l-4-4z"/></svg>
  <svg class="ml-[9px] size-[23px] border border-[#3be03b] bg-[#5285a6]" viewBox="0 0 22 22"><path fill="#e08a4a" d="M2 4h12v15H2z"/><path stroke="#433" stroke-width="1.500" stroke-dasharray="2 2" d="M3 6h11M3 17h16"/><path fill="#e08a4a" d="M12 10h8v9h-8z"/><path fill="#3a3a3a" d="M5 9h5v5H5zM12 9h5v5h-5z"/><path fill="#ddd" d="M12 3h4l3 4-5 2z"/></svg>
  <svg class="h-6 w-[20px]"><use href="#sep"/></svg>
  <svg class="ml-[3px] size-[18px]" viewBox="0 0 18 18"><path fill="none" stroke="#c8c8c8" stroke-width="1.500" d="M3 4c4-4 12-2 13 4M15 14c-4 4-12 2-13-4M3 0v5h5M15 18v-5h-5"/><path stroke="#e07a3a" stroke-width="2" d="M9 5v9M6 9h6"/></svg>
  <svg class="mr-3 ml-[10px] size-[18px]" viewBox="0 0 18 18"><circle cx="4" cy="4" r="2.500" fill="none" stroke="#c8c8c8" stroke-width="1.500"/><circle cx="13" cy="4" r="2.200" fill="#e07a3a"/><path fill="none" stroke="#e07a3a" stroke-width="2" d="M6 8l4-1 3 2 4 1M10 8l-2 5 4 1 1 4M8 13l-5 3"/></svg>
</div>

<!-- Command line -->
<div class="flex h-[34px] shrink-0 items-center border-b-2 border-[#383838] pt-[2px]">
  <span class="ml-[3px] h-6 w-[5px] bg-[radial-gradient(circle,#777777_1px,transparent_1px)] bg-[length:3px_3px]"></span>
  <label for="mel" class="ml-4 w-[35px] text-[#dddddd]">MEL</label>
  <input id="mel" class="h-[22px] w-[454px] rounded-[2px] bg-[#2b2b2b]">
  <span class="mx-[2px] h-3 w-[3px] bg-[radial-gradient(circle,#777777_1px,transparent_1px)] bg-[length:3px_3px]"></span>
  <input aria-label="Command result" readonly class="h-6 flex-1 bg-[#2b2b2b]">
  <svg class="mr-[9px] ml-[6px] size-[18px]" viewBox="0 0 18 18"><path fill="#c8c8c8" d="M0 0h18v18H0z"/><path stroke="#444" d="M0 3.500h18M2 1.500h4"/><path fill="none" stroke="#333" stroke-width="1.300" d="M6 6H4.500v3L3 10.500 4.500 12v3H6M12 6h1.500v3l1.500 1.500-1.500 1.500v3H12M9 8v1.500M9 12v3"/></svg>
</div>
<footer class="flex h-[21px] shrink-0 items-center"><span class="ml-[3px] h-[17px] w-[5px] bg-[radial-gradient(circle,#777777_1px,transparent_1px)] bg-[length:3px_3px]"></span></footer>

<!-- Hypershade window -->
<section class="absolute top-[236px] right-0 bottom-[148px] flex w-[360px] flex-col overflow-hidden bg-[#444444]">
  <div class="h-[30px] shrink-0 bg-white"></div>
  <div class="flex min-h-0 flex-1">
    <div class="mt-6 mb-1 flex w-[208px] shrink-0 flex-col border-r-2 border-[#333333]">
      <div class="flex h-4 items-center gap-[2px] pr-[2px]">
        <span class="mr-[5px] h-[6px] flex-1 bg-[radial-gradient(circle,#777777_1px,transparent_1px)] bg-[length:4px_3px]"></span>
        <button aria-label="Float" class="size-[13px] rounded-[2px] border border-[#222222] bg-[#3a3f42]"><svg viewBox="0 0 11 11" fill="none" stroke="#ddd" stroke-width="1.500"><path d="M1.500 5h5v4h-5zM4.500 5V2h5v4h-3"/></svg></button>
        <button aria-label="Close panel" class="size-[13px] rounded-[2px] border border-[#222222] bg-[#3a3f42]"><svg viewBox="0 0 11 11" stroke="#ddd" stroke-width="2"><path d="M2 2l7 7M9 2l-7 7"/></svg></button>
      </div>
      <div class="mt-[40px] mr-[3px] flex h-[18px] shrink-0 items-end justify-end bg-[#3a3a3a] pr-[25px] text-[#a8a8a8] *:h-4 *:border-x *:border-t *:border-[#303030] *:px-[10px]"><button>Objects</button><button>Asset Nodes</button></div>
      <div class="mr-[3px] flex h-[157px] shrink-0 border-t border-r border-b-2 border-[#555555] bg-[#1b1b1b]">
        <svg class="ml-auto h-full w-[13px] bg-[#3a3a3a]" viewBox="0 0 13 153" preserveAspectRatio="none"><path fill="#c0c0c0" d="M2 8h9L6.500 3zM2 145h9l-4.500 5z"/><rect x="1" y="13" width="10" height="24" rx="3" fill="#5d5d5d"/></svg>
      </div>
      <div class="mt-[4px] flex h-[50px] shrink-0 items-center border-t-2 border-[#373737] pl-[52px]">
        <svg class="size-4" viewBox="0 0 16 16" fill="none" stroke="#c8c8c8" stroke-width="2"><circle cx="6" cy="6" r="4.500"/><path d="M9.500 9.500L15 15"/></svg>
        <svg class="ml-[13px] size-[13px]" viewBox="0 0 13 13" fill="none" stroke="#52b5bd" stroke-width="1.400"><path stroke="#ddd" stroke-width="3" d="M6 4h4v5"/><path d="M.7.7h11.600v11.600H.7zM2 6h5v5H2zM3.500 8.500h2"/></svg>
        <svg class="h-6 w-[24px]"><use href="#sep"/></svg>
        <svg class="size-4" viewBox="0 0 16 16" stroke="#5aab84" stroke-width="1.300"><path d="M5 0v16M11 0v16M0 5h16M0 11h16"/></svg>
        <svg class="ml-[10px] size-[18px]"><use href="#mGrid"/></svg>
        <svg class="ml-[9px] size-4 opacity-30" viewBox="0 0 16 16" fill="none" stroke="#5d9599" stroke-width="2"><path d="M2 6l4-4v8H2M8 5h6v5h-4v3h6M1 14h10"/></svg>
        <span class="ml-2 h-3 w-px bg-[#8a8a8a]"></span>
      </div>
      <div class="mr-[11px] h-[19px] shrink-0 bg-[#373737]"></div>
      <div class="relative mr-[11px] min-h-0 flex-1 overflow-hidden border-2 border-[#262626] bg-[#2e2e2e]">
        <svg class="h-full w-full font-['Liberation_Sans',sans-serif]" font-size="9">
          <rect x="-20" y="66" width="98" height="136" rx="3" fill="#4a4a4a" stroke="#e00010" stroke-width="3"/>
          <path fill="#5e5e5e" d="M0 92h76v16H0zM0 121h76v13H0zM0 146h76v13H0zM0 170h76v13H0z"/>
          <path fill="#8a8a8a" d="M59 71h9v10h-9z"/><circle cx="49" cy="76" r="5" fill="#aaa"/>
          <text x="70" y="94" text-anchor="end" fill="#ddd" font-size="8">Out Color</text><path fill="none" stroke="#ccc" d="M70.500 88.500h5v5h-5zM73 88v5M70 91h5"/>
          <path fill="none" stroke="#a01818" stroke-width="1.500" d="M79 91c32 0 34 13 70 13"/>
          <rect x="149" y="80" width="60" height="60" rx="3" fill="#2c3d72"/><path stroke="#35478a" stroke-width="12" d="M150 117h50"/>
          <circle cx="78" cy="77" r="5" fill="#f00010"/><circle cx="78" cy="91" r="4" fill="#f00010"/><circle cx="149" cy="89" r="5" fill="#f00010"/><circle cx="149" cy="104" r="4" fill="#f00010"/><circle cx="149" cy="116" r="4"/><circle cx="149" cy="128" r="4"/>
          <circle cx="165" cy="89" r="6" fill="#bbb"/><path fill="#555" d="M162 87h6v5h-6z"/>
          <g fill="#fff"><text x="152" y="74">lambert2SG</text><g font-size="8"><text x="160" y="107">Surface Shader</text><text x="160" y="119">Volume Shader</text><text x="160" y="131">Displacement</text></g></g>
        </svg>
      </div>
      <div class="h-3 shrink-0"></div>
    </div>
    <div class="flex w-[152px] shrink-0 flex-col overflow-hidden pt-6 pl-1">
      <span class="mt-[6px] ml-1 h-[6px] shrink-0 bg-[radial-gradient(circle,#777777_1px,transparent_1px)] bg-[length:4px_3px]"></span>
      <div class="mt-[8px] flex h-[29px] shrink-0 items-center pb-[5px]">
        <svg class="h-[22px] w-[13px] shrink-0"><use href="#sep"/></svg>
        <div class="relative h-[19px] w-[93px] shrink-0">
          <select aria-label="Renderer" class="h-full w-full appearance-none bg-[#5d5d5d] pl-[3px]"><option>Hardware</option></select>
          <span class="pointer-events-none absolute inset-y-0 right-0 flex w-[19px] items-center justify-center border-l border-[#4c4c4c]"><svg class="h-[6px] w-[10px]"><use href="#tri"/></svg></span>
        </div>
        <select aria-label="Shape" class="ml-[7px] h-[19px] w-[90px] shrink-0 appearance-none bg-[#5d5d5d] pl-[3px]"><option>Sphere</option></select>
      </div>
      <div class="relative h-[211px] shrink-0 overflow-hidden border-b border-[#2e2e2e] bg-[#585858]"><div class="absolute top-[48px] -right-[110px] size-[115px] rounded-full bg-[#aba57f]"></div></div>
      <span class="mt-3 ml-1 h-[6px] shrink-0 bg-[radial-gradient(circle,#777777_1px,transparent_1px)] bg-[length:4px_3px]"></span>
      <div class="mt-3 mb-1 ml-[2px] min-h-0 flex-1 overflow-hidden border-b-2 border-l-2 border-[#333333] pl-[2px]">
        <div class="flex h-[22px] items-start border-b border-[#2c2c2c] bg-[#373737]"><button class="h-[19px] w-20 bg-[#444444] text-[#eeeeee]">create_wall</button></div>
        <p class="pt-[6px] pl-[102px]">lambert: create_wall</p>
        <p class="pt-[11px] pb-[8px] pl-[12px]"><b class="font-semibold text-[#c4c4c4]">View:</b> Lookdev</p>
        <div class="-mr-5 ml-[5px] text-[#b8b8b8]">
          <h3 class="flex h-5 items-center bg-[#5a5a5a] pl-[7px] font-semibold text-[#cccccc]"><svg class="mr-[15px] mb-1 h-[6px] w-[11px] shrink-0"><use href="#tri-w"/></svg>Common Material Properties</h3>
          <div class="flex flex-col items-end gap-1 py-[5px] pr-[11px]"><span>Color</span><span>Transparency</span><span>Ambient Color</span><span>Incandescence</span><span>Diffuse</span></div>
          <h3 class="flex h-5 items-center bg-[#5a5a5a] pl-[7px] font-semibold text-[#cccccc]"><svg class="mr-[15px] mb-1 h-[6px] w-[11px] shrink-0"><use href="#tri-w"/></svg>Bump/Normal Mapping</h3>
          <div class="flex justify-end py-[5px] pr-[11px]"><span>Map</span></div>
          <h3 class="flex h-5 items-center bg-[#5a5a5a] pl-[7px] font-semibold text-[#cccccc]"><svg class="mr-[15px] mb-1 h-[6px] w-[11px] shrink-0"><use href="#tri-w"/></svg>Advanced Material Properties</h3>
          <h3 class="mt-[3px] ml-1 flex h-5 items-center bg-[#5a5a5a] pl-[7px] font-semibold text-[#cccccc]"><svg class="mr-[15px] mb-1 h-[6px] w-[11px] shrink-0"><use href="#tri-w"/></svg>Ray Tracing</h3>
        </div>
      </div>
    </div>
  </div>
</section>

<!-- UV Editor window -->
<section class="absolute top-[119px] right-[306px] bottom-[81px] left-[199px] flex flex-col border border-[#e8a92e] bg-[#444444] shadow-[0_2px_14px_rgba(0,0,0,0.45)]">
  <div class="flex h-[30px] shrink-0 items-center bg-white pl-[9px]">
    <svg class="size-[14px]"><use href="#logo"/></svg>
    <div class="ml-auto flex gap-[35px] pr-[17px]">
      <button aria-label="Minimize"><svg class="h-[11px] w-[11px]" fill="none" stroke="#000"><path d="M1 4.500h10"/></svg></button>
      <button aria-label="Maximize"><svg class="h-[11px] w-[11px]" fill="none" stroke="#000"><path d="M.5.5h9v9h-9z"/></svg></button>
      <button aria-label="Close"><svg class="h-[11px] w-[11px]" fill="none" stroke="#000"><path d="M.5.5l9 9M9.500.5l-9 9"/></svg></button>
    </div>
  </div>
  <div class="flex min-h-0 flex-1">
    <div class="flex min-w-0 flex-1 flex-col">
      <div class="flex h-[18px] shrink-0 items-end bg-[#373737] pl-[3px]"><button class="h-4 bg-[#444444] px-[9px] leading-[18px] text-[#eeeeee]">UV Editor</button></div>
      <nav class="flex h-[22px] shrink-0 items-center gap-[15px] pl-[11px]"><a href="#">Edit</a><a href="#">Create</a><a href="#">Select</a><a href="#">Cut/Sew</a><a href="#">Modify</a><a href="#">Tools</a><a href="#">View</a><a href="#">Image</a><a href="#">Textures</a><a href="#">UV Sets</a><a href="#">Help</a></nav>
      <div class="flex h-[33px] shrink-0 items-center pl-[9px]">
        <div class="flex gap-[1px] *:size-[22px]">
          <svg class="bg-[#5285a6]" viewBox="0 0 22 22" fill="#34566e" stroke="#e8e8e8" stroke-width="1.300"><path d="M11 4h7v7h-7zM4 11h7v7H4zM11 11h7v7h-7z"/></svg>
          <svg viewBox="0 0 22 22"><path fill="#4f9a74" stroke="#3d7257" d="M11 4h7v14H4v-7h7zM11 11h7M11 11v7"/></svg>
          <svg viewBox="0 0 22 22"><path fill="#4f9a74" d="M12 4h7v14h-7z"/><path fill="#cfe0d6" d="M5 10h8l5 8H5z"/></svg>
        </div>
        <div class="ml-[6px] flex gap-[1px] *:size-[22px]">
          <svg class="bg-[#5285a6]" viewBox="0 0 22 22" fill="none"><path fill="#3b4a50" stroke="#e8e8e8" stroke-width="1.400" d="M4 4h14v14H4z"/><path stroke="#6cc297" stroke-width="1.400" d="M6.500 6.500h9v9h-9zM11 7v8M7 11h8"/></svg>
          <svg viewBox="0 0 22 22" fill="none"><path stroke="#9a9a9a" stroke-width="1.200" d="M4 4h14v14H4z"/><path stroke="#4f8a6c" stroke-width="1.400" d="M6.500 6.500h9v9h-9zM11 7v8M7 11h8"/></svg>
        </div>
        <div class="ml-[6px] flex gap-[1px] *:size-[22px]">
          <svg class="bg-[#5285a6]" viewBox="0 0 22 22" fill="#3b4a50" stroke="#e8e8e8" stroke-width="1.300"><path d="M4 4h14v14H4zM8.500 4v14M13.500 4v14M4 8.500h14M4 13.500h14"/></svg>
          <svg viewBox="0 0 22 22"><circle cx="11" cy="11" r="4" fill="#ddd"/><circle cx="11" cy="11" r="7.500" fill="none" stroke="#c8c8c8" stroke-width="1.300" stroke-dasharray="5 2"/></svg>
        </div>
        <span class="ml-[3px] h-5 w-px bg-[#3a3a3a]"></span>
        <svg class="ml-[4px] size-[18px]" viewBox="0 0 18 18"><path fill="#c8c8c8" d="M1 4h2V2h4v1h10v13H1z"/><circle cx="9.500" cy="9.500" r="4" fill="none" stroke="#444" stroke-width="1.400"/><circle cx="9.500" cy="9.500" r="2" fill="#444"/></svg>
        <div class="ml-auto flex items-center pr-[11px]">
          <svg class="size-[22px] border-2 border-[#5285a6] bg-[#2d4a3c]" viewBox="0 0 18 18"><path fill="#5cae86" d="M2 2h14v14H2z"/><path fill="#26332d" d="M2 16l5-10 3 5 3-3 3 8z"/><circle cx="12" cy="5" r="1.500" fill="#26332d"/></svg>
          <svg class="ml-1 size-[15px]" viewBox="0 0 15 15"><defs><pattern id="chk" width="4" height="4" patternUnits="userSpaceOnUse"><path fill="#ddd" d="M0 0h2v2H0zM2 2h2v2H2z"/></pattern></defs><path fill="#333" d="M0 0h15v15H0z"/><path fill="url(#chk)" d="M0 0h15v15H0z"/></svg>
          <span class="flex w-[25px] justify-center"><svg class="h-[5px] w-2"><use href="#tri"/></svg></span>
          <input aria-label="Texture" value="No texture found" readonly class="h-[22px] w-[114px] rounded-[2px] bg-[#414141] pl-1 text-[#8e8e8e]">
          <svg class="ml-[7px] size-[18px]" viewBox="0 0 18 18" fill="none" stroke="#5cae86"><circle cx="9" cy="9" r="7.500" stroke-width="1.300" stroke-dasharray="9 3"/><path stroke-width="1.400" d="M2 12V6h3v3H2l3 3M10.500 6.500H7.500v5h3V9H9M13 12V6h3v6zM13 9h3M5 3l5 1M8 15l5-1"/></svg>
          <svg class="ml-[6px] size-[15px]" viewBox="0 0 15 15"><path fill="#5cae86" d="M0 0h15v15H0z"/><path fill="#2f5542" d="M1 14L6 4l3 5 2-3 3 8z"/><circle cx="11" cy="3" r="1.500" fill="#2f5542"/></svg>
          <input type="range" aria-label="Image dimming" value="50" class="ml-2 h-[3px] w-[51px] appearance-none rounded-full bg-[#2b2b2b] [&::-webkit-slider-thumb]:h-[13px] [&::-webkit-slider-thumb]:w-[7px] [&::-webkit-slider-thumb]:appearance-none [&::-webkit-slider-thumb]:rounded-[1px] [&::-webkit-slider-thumb]:bg-[#c4c4c4]">
          <svg class="ml-[7px] h-5 w-4" viewBox="0 0 16 20" fill="#909090"><path d="M1 0h1v5l4 5-4 5v5H1zM10 0h1v5l4 5-4 5v5h-1z"/></svg>
        </div>
      </div>
      <div class="relative mr-[2px] mb-[3px] ml-[3px] min-h-0 flex-1 overflow-hidden bg-[#5c5c5c]">
        <svg id="uv" class="absolute inset-0 h-full w-full font-['Liberation_Sans',sans-serif]" font-size="10">
          <defs>
            <linearGradient id="wall" x1="0" y1="0" x2="0" y2="1"><stop offset="0" stop-color="#757263"/><stop offset=".5" stop-color="#746e59"/><stop offset=".93" stop-color="#6d6750"/><stop offset="1" stop-color="#5c5541"/></linearGradient>
            <radialGradient id="haze" cx=".85" cy=".2" r=".55"><stop offset="0" stop-color="#87907f" stop-opacity=".45"/><stop offset="1" stop-color="#87907f" stop-opacity="0"/></radialGradient>
            <pattern id="brick" x="292" y="97" width="70" height="70" patternUnits="userSpaceOnUse"><g fill="#4a4428"><path opacity=".12" d="M0 33h70v4H0zM0 67h70v3H0zM64 0h5v34h-5zM30 36h5v32h-5z"/><path opacity=".22" d="M0 34h70v2H0zM0 68h70v2H0zM66 0h1v34h-1zM32 36h1v32h-1z"/></g></pattern>
            <filter id="stain" x="0" y="0" width="1" height="1"><feTurbulence type="fractalNoise" baseFrequency=".018 .028" numOctaves="5" seed="8"/><feColorMatrix values="0 0 0 0 .62  0 0 0 0 .6  0 0 0 0 .48  2.600 0 0 0 -1.150"/></filter>
            <filter id="grime" x="0" y="0" width="1" height="1"><feTurbulence type="fractalNoise" baseFrequency=".03 .04" numOctaves="5" seed="21"/><feColorMatrix values="0 0 0 0 .3  0 0 0 0 .28  0 0 0 0 .18  0 2.400 0 0 -1.100"/></filter>
            <filter id="soft"><feGaussianBlur stdDeviation="1"/></filter>
          </defs>
          <path fill="url(#wall)" d="M292 97h417v417H292z"/>
          <path fill="url(#haze)" d="M292 97h417v417H292z"/>
          <rect x="292" y="97" width="417" height="417" filter="url(#stain)" opacity=".22"/>
          <rect x="292" y="97" width="417" height="417" filter="url(#grime)" opacity=".22"/>
          <path fill="url(#brick)" filter="url(#soft)" d="M292 97h417v417H292z"/>
          <g id="grid" stroke="#484844" stroke-opacity=".6" shape-rendering="crispEdges"></g>
          <g shape-rendering="crispEdges" fill="none">
            <path stroke="#000" d="M292.500 0v2000M708.500 0v2000M0 97.500h4000M0 513.500h4000"/>
            <path stroke="#1a1ae0" d="M292.500 98v208"/><path stroke="#1fdc1f" d="M292.500 306v207"/><path stroke="#d01818" d="M293 513.500h52"/><path stroke="#1414d0" d="M657 513.500h51"/>
            <path stroke="#fff" d="M449 201.500h103M449 305.500h103M449 409.500h103M448.500 409v103M552.500 409v103"/>
            <path stroke="#fff" stroke-width="2" d="M448 98h104v311h104v104H345V409h103z"/>
          </g>
          <g id="labels" fill="#2c2c2c"></g>
        </svg>
        <p class="absolute right-[5px] bottom-[2px] font-['Liberation_Sans',sans-serif] text-[10px] font-bold text-white">(0/0) UV shells, (0/0) overlapping UVs, (0/0) reversed UVs</p>
      </div>
    </div>

    <!-- UV Toolkit -->
    <aside class="flex w-[298px] shrink-0 flex-col border-l-[3px] border-[#3a3a3a]">
      <div class="flex h-[18px] shrink-0 items-end bg-[#373737] pl-[2px]"><button class="h-4 bg-[#444444] px-[10px] leading-[18px] text-[#eeeeee]">UV Toolkit</button></div>
      <nav class="flex h-[22px] shrink-0 items-center gap-[15px] pl-[12px]"><a href="#">Options</a><a href="#">Help</a></nav>
      <div class="mt-[8px] flex h-9 items-center pl-[31px]">
        <svg class="size-[28px]" viewBox="0 0 28 28" fill="none" stroke-width="1.300"><path stroke="#ddd" d="M7 3.500h13M7 23.500h13M3.500 7v13M23.500 7v13"/><path stroke="#6cc297" d="M1.500 1.500h4v4h-4zM21.500 1.500h4v4h-4zM1.500 21.500h4v4h-4zM21.500 21.500h4v4h-4z"/></svg>
        <svg class="ml-2 size-[30px]" viewBox="0 0 30 30" fill="none" stroke-width="1.500"><path stroke="#c8c8c8" d="M15 1.500L2 15l13 13.500L28 15"/><path stroke="#5aab84" d="M15 1.500L28 15"/></svg>
        <svg class="ml-2 size-[28px]" viewBox="0 0 28 28"><path fill="#c8c8c8" d="M14 0l12 6-12 7L2 6z"/><path fill="#c0c0c0" d="M1 8l12 7v13L1 21z"/><path fill="#5aab84" d="M27 8v13l-12 7V15z"/></svg>
        <span class="ml-[20px] h-9 w-px bg-[#505050]"></span>
        <svg class="ml-[19px] size-[28px]" viewBox="0 0 28 28" fill="none" stroke-width="1.300"><path stroke="#ddd" d="M7 3.500h13M7 23.500h13M3.500 7v13M23.500 7v13"/><path stroke="#6cc297" d="M1.500 1.500h4v4h-4zM21.500 1.500h4v4h-4zM1.500 21.500h4v4h-4zM21.500 21.500h4v4h-4z"/><path fill="#ddd" d="M9 9h3v3H9zM15 9h3v3h-3zM12 12h3v3h-3zM9 15h3v3H9zM15 15h3v3h-3z"/></svg>
        <svg class="ml-[9px] size-[28px]" viewBox="0 0 28 28" fill="none" stroke="#5aab84" stroke-width="1.300"><path d="M1.500 1.500h24v24h-24zM13.500 1.500v24M1.500 13.500h24"/></svg>
      </div>
      <p class="mt-[8px] text-center">1 object selected</p>
      <fieldset class="mt-[9px] flex flex-col gap-[2px] pl-[14px]">
        <label class="flex items-center gap-2"><input type="radio" name="pick" checked class="size-[9px] appearance-none rounded-full border-2 border-[#2b2b2b] bg-[#2b2b2b] checked:bg-[#e8e8e8]">Pick/Marquee</label>
        <label class="flex items-center gap-2"><input type="radio" name="pick" class="size-[9px] appearance-none rounded-full bg-[#2b2b2b]">Drag</label>
        <label class="flex items-center gap-2 text-[#777777]"><input type="radio" name="pick" disabled class="size-[9px] appearance-none rounded-full bg-[#2b2b2b]">Tweak/Marquee</label>
      </fieldset>
      <div class="mt-[9px] flex flex-col gap-[5px] pl-[13px]">
        <div class="flex h-[22px] items-center"><label for="sym" class="w-[71px]">Symmetry:</label><svg class="mr-[15px] h-[5px] w-2"><use href="#tri"/></svg><input id="sym" value="Off" class="h-[22px] w-[148px] bg-[#414141] pl-[1px]"><svg class="ml-[6px] size-[18px]" viewBox="0 0 18 18"><path fill="#5aab84" d="M1 1h6v7H1zM0 9h7v8l-7-3zM11 1h6v7h-6zM11 9h7v5l-7 3z"/><path stroke="#ddd" stroke-dasharray="3 1" d="M9 0v18"/></svg></div>
        <div class="flex h-[22px] items-center"><label for="selc" class="w-[126px]">Selection Constraint:</label><svg class="mr-[15px] h-[5px] w-2"><use href="#tri"/></svg><input id="selc" value="Off" class="h-[22px] w-[121px] bg-[#414141] pl-[1px]"></div>
        <div class="flex h-[22px] items-center"><label for="trc" class="w-[126px]">Transform Constraint:</label><svg class="mr-[15px] h-[5px] w-2"><use href="#tri"/></svg><input id="trc" value="Off" class="h-[22px] w-[121px] bg-[#414141] pl-[1px]"></div>
      </div>
      <div class="mt-2 flex gap-3 pl-[43px] *:h-5 *:w-[50px] *:bg-[#5d5d5d] *:text-[#eeeeee]"><button>All</button><button>Clear</button><button>Inverse</button></div>
      <div class="mt-[9px] flex pl-[69px] *:h-4 *:w-[18px]">
        <svg viewBox="0 0 18 16"><path fill="#5aab84" d="M0 2h4V0l4 3-4 3V4H0zM18 2h-4V0l-4 3 4 3V4h4zM7 10h4v3H7z"/><path fill="#ddd" d="M2 10h4v3H2zM12 10h4v3h-4z"/></svg>
        <svg class="ml-[14px]" viewBox="0 0 18 16"><path fill="#5aab84" d="M0 2h4V0l4 3-4 3V4H0zM18 2h-4V0l-4 3 4 3V4h4zM7 7h4v8H7z"/><path fill="#ddd" d="M2 7h4v4H2zM12 7h4v4h-4zM2 12h4v3H2zM12 12h4v3h-4z"/></svg>
        <svg class="ml-6" viewBox="0 0 18 16"><path fill="#5aab84" d="M0 3l4-3v2h10V0l4 3-4 3V4H4v2zM2 7h4v4H2zM7 7h4v4H7zM12 7h4v4h-4zM2 12h4v3H2zM7 12h4v3H7zM12 12h4v3h-4z"/></svg>
        <svg class="ml-[14px]" viewBox="0 0 18 16"><path fill="#5aab84" d="M0 3l4-3v2h10V0l4 3-4 3V4H4v2zM2 10h4v3H2zM7 10h4v3H7zM12 10h4v3h-4z"/></svg>
      </div>
      <div class="mt-2 mr-3 ml-[12px] flex flex-col gap-[2px] font-semibold text-[#bbbbbb] *:flex *:h-5 *:items-center *:gap-3 *:bg-[#3c3c3c] *:pl-[10px]">
        <button><svg class="mb-1 h-3 w-[6px]"><use href="#tri-r"/></svg>Pinning</button>
        <button><svg class="mb-1 h-3 w-[6px]"><use href="#tri-r"/></svg>Select By Type</button>
        <button><svg class="mb-1 h-3 w-[6px]"><use href="#tri-r"/></svg>Soft Selection</button>
      </div>
      <div class="mt-2 mr-[6px] ml-[6px] flex flex-col gap-[2px] font-semibold text-[#bbbbbb] *:flex *:h-5 *:items-center *:gap-3 *:bg-[#3c3c3c] *:pl-[10px]">
        <button><svg class="mb-1 h-3 w-[6px]"><use href="#tri-r"/></svg>Transform</button>
        <button><svg class="mb-1 h-3 w-[6px]"><use href="#tri-r"/></svg>Create</button>
        <button><svg class="mb-1 h-3 w-[6px]"><use href="#tri-r"/></svg>Cut and Sew</button>
        <button><svg class="mb-1 h-3 w-[6px]"><use href="#tri-r"/></svg>Unfold</button>
        <button><svg class="mb-1 h-3 w-[6px]"><use href="#tri-r"/></svg>Align and Snap</button>
        <button><svg class="mb-1 h-3 w-[6px]"><use href="#tri-r"/></svg>Arrange and Layout</button>
      </div>
      <span class="mx-auto mt-auto h-[2px] w-24 border-t-2 border-dotted border-[#666666]"></span>
      <button class="mx-1 mt-[5px] mb-1 flex h-5 shrink-0 items-center gap-3 bg-[#3c3c3c] pl-[10px] font-semibold text-[#bbbbbb]"><svg class="mb-1 h-3 w-[6px]"><use href="#tri-r"/></svg>UV Sets</button>
    </aside>
  </div>
</section>

<script>
  const unit = 416, ox = 292, oy = 513;
  let lines = '', labels = '';
  for (let i = -30; i <= 50; i++) {
    const x = Math.round(ox + i * unit / 10) + 0.5, y = Math.round(oy - i * unit / 10) + 0.5;
    lines += `<path d="M${x} 0v2000M0 ${y}h4000"/>`;
    const t = String(i / 10);
    if ((i < 0 && i >= -7) || (i >= 10 && i <= 19)) labels += `<text x="${x + 1}" y="${oy - 2}">${t}</text>`;
    if ((i < 0 && i >= -5) || (i >= 10 && i <= 12)) labels += `<text x="${ox + 2}" y="${y - 2}">${t}</text>`;
  }
  document.getElementById('grid').innerHTML = lines;
  document.getElementById('labels').innerHTML = labels;
</script>
</body>
</html>
